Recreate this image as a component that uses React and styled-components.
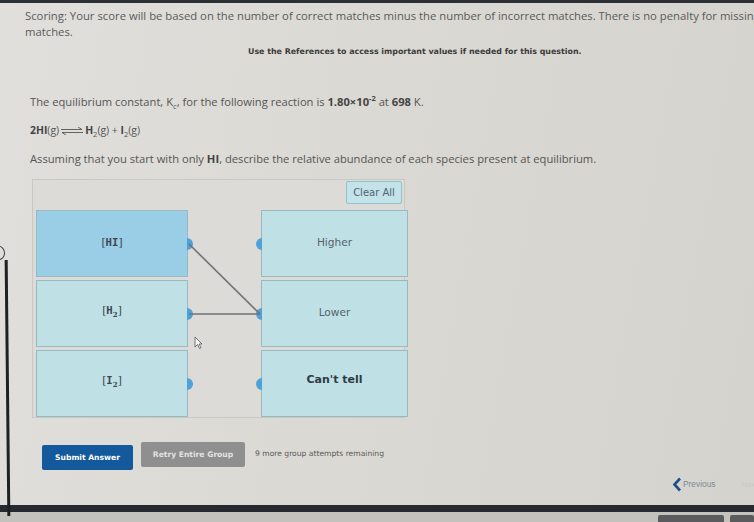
import React from "react";
import styled, { createGlobalStyle } from "styled-components";

const Global = createGlobalStyle`
  html, body { margin: 0; padding: 0; }
  body {
    background: #d9d7d2;
    font-family: "Open Sans", "Liberation Sans", sans-serif;
    color: #505050;
    overflow: hidden;
  }
`;

const Screen = styled.div`
  position: relative;
  width: 754px;
  height: 522px;
  display: flex;
  flex-direction: column;
  background: linear-gradient(100deg, #e1dfdb 0%, #dbd9d4 45%, #d5d3ce 100%);
  overflow: hidden;
`;

const TopStrip = styled.div`
  height: 3px;
  background: #2c2f33;
`;

const Main = styled.div`
  flex: 1;
  display: flex;
  flex-direction: column;
`;

const Scoring = styled.p`
  margin: 5px 0 0 25px;
  font-size: 11.3px;
  line-height: 16px;
  white-space: nowrap;
  color: #5a5a5a;
`;

const RefNote = styled.p`
  margin: 6px 0 0 248px;
  font-family: "DejaVu Sans", sans-serif;
  font-size: 7.9px;
  font-weight: bold;
  line-height: 12px;
  color: #3c3c3c;
`;

const Question = styled.p`
  margin: ${(p) => p.$mt}px 0 0 30px;
  font-size: ${(p) => p.$fs || 11.2}px;
  line-height: 14px;
  color: #555;
  white-space: nowrap;
  b { color: #444; }
  sub, sup { font-size: 7.5px; line-height: 0; }
`;

const Arrow = styled.svg`
  display: inline-block;
  vertical-align: middle;
  margin: 0 1px;
`;

const Panel = styled.div`
  position: relative;
  margin: 13px 0 0 32px;
  width: 373px;
  height: 239px;
  border: 1px solid #c9c8c4;
  background: #dddbd7;
  padding: 1px 2px 0 3px;
  box-sizing: border-box;
`;

const ClearRow = styled.div`
  display: flex;
  justify-content: flex-end;
`;

const ClearBtn = styled.button`
  width: 56px;
  height: 23px;
  border: 1px solid #8fc4cc;
  border-radius: 2px;
  background: #c3e3e8;
  color: #4f6270;
  font-family: "DejaVu Sans", sans-serif;
  font-size: 10px;
  padding: 0;
`;

const Columns = styled.div`
  display: grid;
  grid-template-columns: 152px 73px 147px;
  margin-top: 6px;
`;

const Col = styled.div`
  display: flex;
  flex-direction: column;
  gap: 3px;
`;

const Box = styled.div`
  position: relative;
  height: 67px;
  box-sizing: border-box;
  border: 1px solid #97b9c0;
  background: ${(p) => (p.$active ? "#9acde6" : "#bfe1e6")};
  display: flex;
  align-items: center;
  justify-content: center;
  font-family: "DejaVu Sans", sans-serif;
  font-size: ${(p) => (p.$bold ? "11px" : "10.6px")};
  font-weight: ${(p) => (p.$bold ? "bold" : "normal")};
  color: ${(p) => (p.$bold ? "#2f3a44" : "#55626c")};
  padding-bottom: ${(p) => (p.$bold ? "8px" : "4px")};
`;

const Species = styled.span`
  font-family: "DejaVu Serif", serif;
  font-size: 10.6px;
  color: #3c4650;
  b { font-family: "DejaVu Sans Mono", monospace; font-weight: bold; }
  sub { font-size: 7px; font-weight: bold; }
`;

const Dot = styled.span`
  position: absolute;
  top: 50%;
  ${(p) => (p.$side === "right" ? "right: -6px;" : "left: -6px;")}
  width: 6px;
  height: 12px;
  margin-top: -6px;
  background: #4ea2d8;
  border-radius: ${(p) => (p.$side === "right" ? "0 6px 6px 0" : "6px 0 0 6px")};
`;

const Links = styled.svg`
  position: absolute;
  left: 0;
  top: 0;
  pointer-events: none;
`;

const Actions = styled.div`
  display: flex;
  align-items: center;
  gap: 8px;
  margin: 24px 0 0 42px;
`;

const Btn = styled.button`
  height: 25px;
  width: ${(p) => p.$w}px;
  border: none;
  border-radius: 2px;
  background: ${(p) => (p.$primary ? "#14599c" : "#8f8f8f")};
  color: ${(p) => (p.$primary ? "#ffffff" : "#e2e2e2")};
  font-family: "DejaVu Sans", sans-serif;
  font-size: 7.6px;
  font-weight: bold;
  padding: 0;
  margin-top: ${(p) => (p.$primary ? "3px" : "-3px")};
`;

const Attempts = styled.span`
  margin-left: 2px;
  font-family: "DejaVu Sans", sans-serif;
  font-size: 7.6px;
  color: #5a5a5a;
  margin-top: -6px;
`;

const Pager = styled.div`
  display: flex;
  justify-content: flex-end;
  align-items: center;
  gap: 26px;
  margin: 6px 0 0 0;
  height: 16px;
`;

const PrevLink = styled.span`
  display: flex;
  align-items: center;
  gap: 1px;
  font-family: "Liberation Sans", sans-serif;
  font-size: 8.4px;
  color: #7d8a96;
`;

const NextLink = styled.span`
  font-family: "Liberation Sans", sans-serif;
  font-size: 8px;
  color: #c8c8c6;
  margin-right: -4px;
`;

const BottomBar = styled.div`
  height: 7px;
  background: #262a30;
  margin-top: auto;
`;

const Taskbar = styled.div`
  height: 10px;
  background: #c4c2bd;
  display: flex;
  justify-content: flex-end;
  align-items: flex-end;
  gap: 6px;
`;

const TaskBtn = styled.span`
  width: ${(p) => p.$w}px;
  height: 7px;
  background: #5a5b5d;
  border-radius: 2px 2px 0 0;
`;

const EdgeLine = styled.div`
  position: absolute;
  left: 6px;
  top: 260px;
  width: 3px;
  height: 256px;
  background: #1e2124;
  transform: rotate(-0.6deg);
`;

const EdgeRing = styled.div`
  position: absolute;
  left: -7px;
  top: 246px;
  width: 10px;
  height: 12px;
  border: 1.5px solid #3a3d40;
  border-radius: 50%;
`;

const Cursor = styled.svg`
  position: absolute;
  left: 161px;
  top: 156px;
`;

function Equilibrium() {
  return (
    <Arrow width="24" height="8" viewBox="0 0 24 8">
      <path d="M1 2.5 H22 L18 0" stroke="#555" strokeWidth="0.9" fill="none" />
      <path d="M23 5.5 H2 L6 8" stroke="#555" strokeWidth="0.9" fill="none" />
    </Arrow>
  );
}

export default function App() {
  return (
    <>
      <Global />
      <Screen>
        <TopStrip />
        <Main>
          <Scoring>
            Scoring: Your score will be based on the number of correct matches minus the number of incorrect matches. There is no penalty for missing
            <br />
            matches.
          </Scoring>
          <RefNote>Use the References to access important values if needed for this question.</RefNote>
          <Question $mt={37}>
            The equilibrium constant, K<sub>c</sub>, for the following reaction is <b>1.80×10<sup>-2</sup></b> at <b>698</b> K.
          </Question>
          <Question $mt={14} $fs={10.4}>
            <b>2HI</b>(g)
            <Equilibrium />
            <b>H</b><sub>2</sub>(g) + <b>I</b><sub>2</sub>(g)
          </Question>
          <Question $mt={15}>
            Assuming that you start with only <b>HI</b>, describe the relative abundance of each species present at equilibrium.
          </Question>

          <Panel>
            <ClearRow>
              <ClearBtn>Clear All</ClearBtn>
            </ClearRow>
            <Columns>
              <Col>
                <Box $active>
                  <Species>[<b>HI</b>]</Species>
                  <Dot $side="right" />
                </Box>
                <Box>
                  <Species>[<b>H</b><sub>2</sub>]</Species>
                  <Dot $side="right" />
                </Box>
                <Box>
                  <Species>[<b>I</b><sub>2</sub>]</Species>
                  <Dot $side="right" />
                </Box>
              </Col>
              <div />
              <Col>
                <Box>
                  Higher
                  <Dot $side="left" />
                </Box>
                <Box>
                  Lower
                  <Dot $side="left" />
                </Box>
                <Box $bold>
                  Can't tell
                  <Dot $side="left" />
                </Box>
              </Col>
            </Columns>
            <Links width="373" height="239" viewBox="0 0 373 239">
              <line x1="156" y1="64" x2="227" y2="134" stroke="#6f7274" strokeWidth="1.6" />
              <line x1="156" y1="134" x2="227" y2="134" stroke="#6f7274" strokeWidth="1.6" />
            </Links>
            <Cursor width="9" height="13" viewBox="0 0 9 13">
              <path d="M1 1 L1 11 L3.5 8.5 L5.5 12.5 L7 11.8 L5 8 L8 8 Z" fill="#f4f4f4" stroke="#555" strokeWidth="0.8" />
            </Cursor>
          </Panel>

          <Actions>
            <Btn $primary $w={91}>Submit Answer</Btn>
            <Btn $w={104}>Retry Entire Group</Btn>
            <Attempts>9 more group attempts remaining</Attempts>
          </Actions>

          <Pager>
            <PrevLink>
              <svg width="10" height="15" viewBox="0 0 10 15">
                <path d="M8 1.5 L2.5 7.5 L8 13.5" stroke="#1f4f88" strokeWidth="2.6" fill="none" />
              </svg>
              Previous
            </PrevLink>
            <NextLink>Next</NextLink>
          </Pager>

          <BottomBar />
          <Taskbar>
            <TaskBtn $w={66} />
            <TaskBtn $w={24} />
          </Taskbar>
        </Main>
        <EdgeLine />
        <EdgeRing />
      </Screen>
    </>
  );
}
